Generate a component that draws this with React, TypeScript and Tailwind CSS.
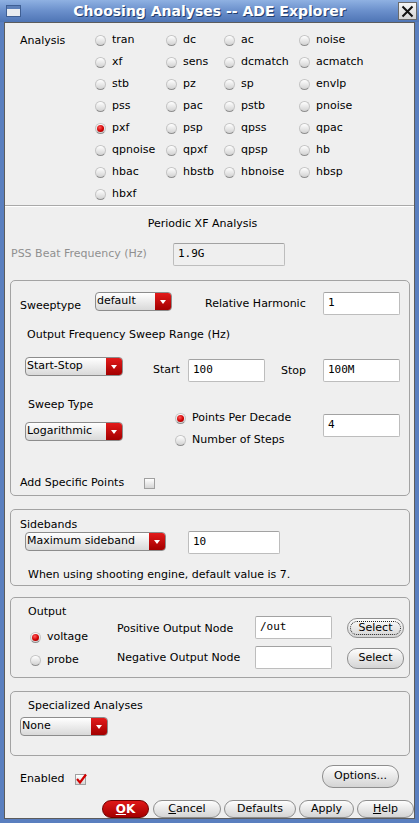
import React from "react";

const analyses: string[][] = [
  ["tran", "dc", "ac", "noise"],
  ["xf", "sens", "dcmatch", "acmatch"],
  ["stb", "pz", "sp", "envlp"],
  ["pss", "pac", "pstb", "pnoise"],
  ["pxf", "psp", "qpss", "qpac"],
  ["qpnoise", "qpxf", "qpsp", "hb"],
  ["hbac", "hbstb", "hbnoise", "hbsp"],
  ["hbxf"],
];

function Radio({ checked = false }: { checked?: boolean }) {
  return (
    <span className="w-[11px] h-[11px] shrink-0 rounded-full border border-[#c4c4c4] border-b-[#8f8f8f] bg-linear-to-b from-[#ffffff] to-[#d2d2d2] flex items-center justify-center">
      {checked && (
        <span className="w-[7px] h-[7px] rounded-full bg-[radial-gradient(circle_at_40%_35%,#ff5a5a,#d00000_55%,#8a0000)]" />
      )}
    </span>
  );
}

function Dropdown({ label, className }: { label: string; className: string }) {
  return (
    <div
      className={`h-[19px] flex rounded-[4px] border border-[#8c8c8c] bg-linear-to-b from-[#ffffff] to-[#d9d9d9] overflow-hidden ${className}`}
    >
      <span className="flex-1 pl-[1px] leading-[16px] text-[11px] whitespace-nowrap">{label}</span>
      <span className="w-[16px] bg-linear-to-b from-[#e31a1a] to-[#a30000] flex items-center justify-center">
        <span className="w-0 h-0 border-l-[3px] border-r-[3px] border-t-[4px] border-l-transparent border-r-transparent border-t-white" />
      </span>
    </div>
  );
}

function Field({
  value = "",
  className,
  bg = "bg-white",
}: {
  value?: string;
  className: string;
  bg?: string;
}) {
  return (
    <div
      className={`h-[23px] rounded-[2px] border border-[#bdbdbd] border-t-[#a2a2a2] pl-[4px] flex items-center font-['DejaVu_Sans_Mono',monospace] text-[11px] ${bg} ${className}`}
    >
      {value}
    </div>
  );
}

function Btn({ children, className }: { children: React.ReactNode; className: string }) {
  return (
    <div
      className={`rounded-[10px] border border-[#8e8e8e] bg-linear-to-b from-[#fdfdfd] to-[#d4d4d4] flex items-center justify-center text-[11px] ${className}`}
    >
      {children}
    </div>
  );
}

function Checkbox({ checked = false }: { checked?: boolean }) {
  return (
    <span className="w-[11px] h-[11px] shrink-0 border border-[#a0a0a0] bg-linear-to-b from-[#ffffff] to-[#d6d6d6] relative">
      {checked && (
        <svg className="absolute -left-[1px] -top-[2px]" width="13" height="12" viewBox="0 0 13 12">
          <path d="M2 6 L5 9.5 L11 1.5" stroke="#d00000" strokeWidth="2.2" fill="none" />
        </svg>
      )}
    </span>
  );
}

export default function App() {
  return (
    <div className="w-[419px] h-[823px] bg-[#5a7fbf] flex flex-col overflow-hidden font-['DejaVu_Sans',sans-serif] text-[11px] text-black">
      {/* Title bar */}
      <div className="h-[22px] shrink-0 flex items-center bg-linear-to-b from-[#8fb1e2] via-[#6a8fcb] to-[#4f75b5]">
        <div className="ml-[6px] w-[15px] h-[12px] border border-[#3f5f94] bg-[#e9ecf0] flex flex-col">
          <div className="h-[3px] bg-[#5d80b9]" />
        </div>
        <div className="flex-1 text-center text-white font-bold text-[14px] leading-[22px] [text-shadow:1px_1px_0_#24406f]">
          Choosing Analyses -- ADE Explorer
        </div>
        <div className="mr-[2px] w-[19px] h-[18px] border border-[#6a6a6a] bg-linear-to-b from-[#f6f6f6] to-[#d4d4d4] flex items-center justify-center">
          <svg width="13" height="13" viewBox="0 0 13 13">
            <path d="M1.5 1.5 L11.5 11.5 M11.5 1.5 L1.5 11.5" stroke="#111" strokeWidth="2" />
          </svg>
        </div>
      </div>

      {/* Content */}
      <div className="mx-[4px] w-[411px] h-[797px] shrink-0 bg-[#efefef] border border-[#5c5c5c] flex flex-col">
        {/* Analysis radios */}
        <div className="pt-[6px] pl-[15px] flex">
          <div className="w-[75px] pt-[5px] leading-[14px]">Analysis</div>
          <div className="grid grid-cols-[71px_58px_75px_1fr]">
            {analyses.flatMap((row, r) =>
              [0, 1, 2, 3].map((c) =>
                row[c] ? (
                  <div key={`${r}-${c}`} className="h-[22px] flex items-center">
                    <Radio checked={row[c] === "pxf"} />
                    <span className="ml-[6px] leading-[14px]">{row[c]}</span>
                  </div>
                ) : (
                  <div key={`${r}-${c}`} className="h-[22px]" />
                )
              )
            )}
          </div>
        </div>
        <div className="h-[2px] border-t border-[#a9a9a9] border-b border-b-white" />

        <div className="mt-[9px] h-[16px] leading-[16px] text-center pr-[14px]">Periodic XF Analysis</div>

        <div className="mt-[11px] pl-[6px] flex items-center">
          <span className="w-[162px] text-[#8f8f8f]">PSS Beat Frequency (Hz)</span>
          <Field value="1.9G" bg="bg-[#efefef]" className="w-[112px] h-[22px]" />
        </div>

        {/* Sweep group */}
        <div className="mt-[14px] ml-[5px] w-[400px] border border-[#a3a3a3] rounded-[5px] pb-[5px]">
          <div className="mt-[11px] flex items-start h-[22px]">
            <span className="ml-[9px] w-[75px] mt-[7px] leading-[14px]">Sweeptype</span>
            <Dropdown label="default" className="w-[77px]" />
            <span className="ml-[33px] w-[118px] mt-[5px] leading-[14px]">Relative Harmonic</span>
            <Field value="1" className="w-[77px] h-[22px] font-['DejaVu_Sans',sans-serif]" />
          </div>

          <div className="mt-[14px] pl-[16px] leading-[14px]">Output Frequency Sweep Range (Hz)</div>

          <div className="mt-[15px] flex items-start h-[25px]">
            <Dropdown label="Start-Stop" className="ml-[14px] w-[98px]" />
            <span className="ml-[30px] w-[35px] mt-[6px] leading-[14px]">Start</span>
            <Field value="100" className="mt-[2px] w-[77px]" />
            <span className="ml-[16px] w-[42px] mt-[7px] leading-[14px]">Stop</span>
            <Field value="100M" className="mt-[2px] w-[77px]" />
          </div>

          <div className="mt-[16px] flex items-start h-[53px]">
            <div className="ml-[14px] w-[98px] flex flex-col">
              <span className="pl-[3px] leading-[14px]">Sweep Type</span>
              <Dropdown label="Logarithmic" className="mt-[10px] w-[98px]" />
            </div>
            <div className="ml-[52px] w-[148px] mt-[9px] flex flex-col">
              <div className="h-[22px] flex items-center">
                <Radio checked />
                <span className="ml-[6px]">Points Per Decade</span>
              </div>
              <div className="h-[22px] flex items-center">
                <Radio />
                <span className="ml-[6px]">Number of Steps</span>
              </div>
            </div>
            <Field value="4" className="mt-[16px] w-[77px]" />
          </div>

          <div className="mt-[25px] h-[14px] flex items-center">
            <span className="ml-[9px] w-[124px] leading-[14px]">Add Specific Points</span>
            <Checkbox />
          </div>
        </div>

        {/* Sidebands group */}
        <div className="mt-[13px] ml-[5px] w-[400px] border border-[#a3a3a3] rounded-[5px] pb-[3px]">
          <div className="mt-[8px] h-[13px] pl-[9px] leading-[13px]">Sidebands</div>
          <div className="flex items-start h-[23px]">
            <Dropdown label="Maximum sideband" className="mt-[1px] ml-[14px] w-[141px]" />
            <Field value="10" className="ml-[22px] w-[92px]" />
          </div>
          <div className="mt-[14px] pl-[17px] leading-[14px]">When using shooting engine, default value is 7.</div>
        </div>

        {/* Output group */}
        <div className="mt-[11px] ml-[5px] w-[400px] border border-[#a3a3a3] rounded-[5px] pb-[5px] flex items-start">
          <div className="ml-[17px] w-[89px] flex flex-col">
            <span className="mt-[7px] leading-[14px]">Output</span>
            <div className="mt-[7px] h-[23px] flex items-center ml-[2px]">
              <Radio checked />
              <span className="ml-[6px]">voltage</span>
            </div>
            <div className="h-[23px] flex items-center ml-[2px]">
              <Radio />
              <span className="ml-[6px]">probe</span>
            </div>
          </div>
          <div className="mt-[18px] flex flex-col">
            <div className="h-[23px] flex items-start">
              <span className="w-[138px] mt-[6px] leading-[14px]">Positive Output Node</span>
              <Field value="/out" className="w-[77px] font-['DejaVu_Sans',sans-serif]" />
              <Btn className="ml-[15px] mt-[2px] w-[57px] h-[20px] p-[2px]">
                <span className="w-full h-full rounded-[7px] border border-dotted border-[#222] flex items-center justify-center">
                  Select
                </span>
              </Btn>
            </div>
            <div className="mt-[7px] h-[23px] flex items-start">
              <span className="w-[138px] mt-[5px] leading-[14px]">Negative Output Node</span>
              <Field className="w-[77px]" />
              <Btn className="ml-[15px] mt-[2px] w-[57px] h-[21px]">Select</Btn>
            </div>
          </div>
        </div>

        {/* Specialized group */}
        <div className="mt-[13px] ml-[5px] w-[400px] border border-[#a3a3a3] rounded-[5px] pb-[19px]">
          <div className="mt-[7px] pl-[17px] leading-[14px]">Specialized Analyses</div>
          <Dropdown label="None" className="mt-[4px] ml-[9px] w-[88px]" />
        </div>

        {/* Enabled / Options */}
        <div className="mt-[9px] h-[23px] flex items-start">
          <span className="ml-[15px] w-[55px] mt-[7px] leading-[14px]">Enabled</span>
          <span className="mt-[9px] flex">
            <Checkbox checked />
          </span>
          <Btn className="ml-auto mr-[15px] w-[77px] h-[23px] rounded-[11px]">Options...</Btn>
        </div>

        {/* Bottom buttons */}
        <div className="mt-[12px] h-[18px] flex justify-end">
          <div className="w-[47px] h-[18px] rounded-[9px] border border-[#6e0000] bg-linear-to-b from-[#e01818] to-[#a50000] flex items-center justify-center text-white font-bold text-[12px]">
            <span>
              <span className="underline">O</span>K
            </span>
          </div>
          <Btn className="ml-[4px] w-[68px] h-[18px]">
            <span>
              <span className="underline">C</span>ancel
            </span>
          </Btn>
          <Btn className="ml-[3px] w-[72px] h-[18px]">Defaults</Btn>
          <Btn className="ml-[3px] w-[55px] h-[18px]">Apply</Btn>
          <Btn className="ml-[3px] w-[57px] h-[18px]">
            <span>
              <span className="underline">H</span>elp
            </span>
          </Btn>
        </div>
      </div>
    </div>
  );
}
